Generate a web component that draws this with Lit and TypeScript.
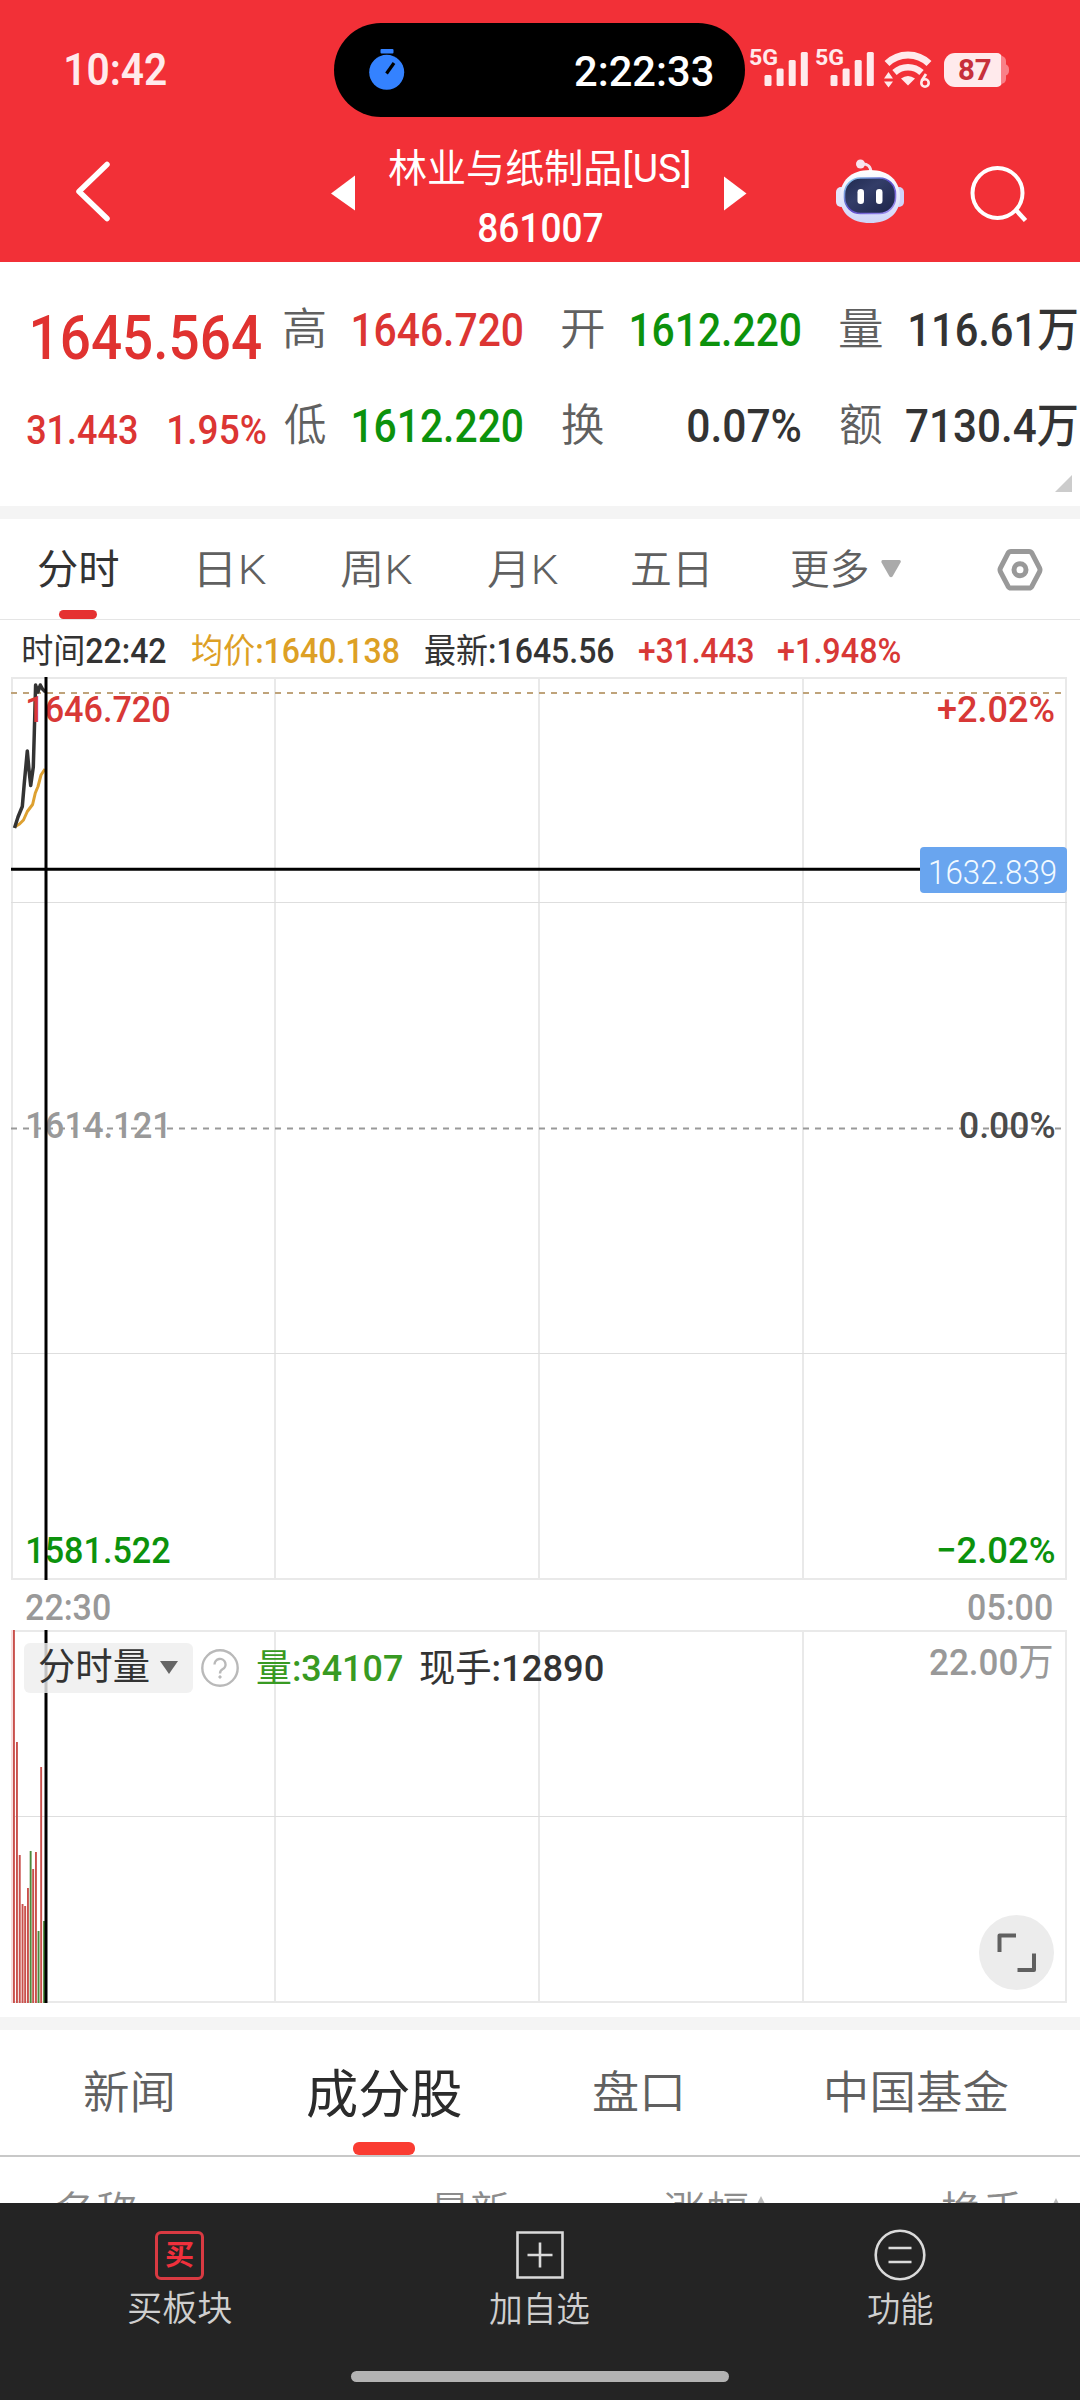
import { LitElement, html, svg, css } from "lit";
import { customElement, property, state, query } from "lit/decorators.js";
import { classMap } from "lit/directives/class-map.js";

/** One line of text whose visible ink spans exactly `w` pixels. */
@customElement("fit-text")
class FitText extends LitElement {
  static styles = css`
    :host { display: block; flex: none; white-space: nowrap; }
    .box { display: block; }
    .ink { display: inline-block; transform-origin: 0 50%; vertical-align: top; }
    .han { font-weight: var(--han-weight, inherit); }
  `;
  @property() text = "";
  @property({ type: Number }) w = 0;
  @state() private fit = "none";
  @query(".ink") private ink!: HTMLElement;

  firstUpdated() {
    const ctx = document.createElement("canvas").getContext("2d")!;
    const runs = [...this.ink.querySelectorAll("span")].map((run) => {
      const cs = getComputedStyle(run);
      ctx.font = `${cs.fontWeight} ${cs.fontSize} ${cs.fontFamily}`;
      return ctx.measureText(run.textContent ?? "");
    });
    const last = runs[runs.length - 1];
    const left = -runs[0].actualBoundingBoxLeft;
    const advance = runs.reduce((sum, m) => sum + m.width, 0);
    const scale = this.w / (advance - last.width + last.actualBoundingBoxRight - left);
    this.fit = `translateX(${-left * scale}px) scaleX(${scale})`;
  }

  render() {
    const runs = this.text.match(/[\u4e00-\u9fff]+|[^\u4e00-\u9fff]+/g) ?? [];
    return html`<div class="box" style="width:${this.w}px"><span class="ink" style="transform:${this.fit}">${runs.map(
      (run) => html`<span class=${classMap({ han: /[\u4e00-\u9fff]/.test(run) })}>${run}</span>`,
    )}</span></div>`;
  }
}

const t = (text: string, w: number, cls = "") =>
  html`<fit-text class=${cls} .text=${text} .w=${w}></fit-text>`;

@customElement("status-bar")
class StatusBar extends LitElement {
  static styles = css`
    :host { display: block; height: 134px; color: #ffeaec; }
    .row { display: flex; height: 140px; align-items: center; line-height: 46px; }
    .clock { margin-left: 65.5px; font-size: 43.5px; font-weight: 600; padding-top: 2px; }
    .island { margin-left: 168px; width: 411px; height: 94px; box-sizing: border-box; padding: 0 32px 0 34px;
      border-radius: 47px; background: #000; color: #fff; display: flex; align-items: center; justify-content: space-between; }
    .timer { font-size: 43px; font-weight: 500; padding-top: 2px; }
    .island svg { display: block; }
    .cell { display: flex; align-items: flex-start; margin-left: 5px; width: 61px; height: 40px; line-height: 18px; font-size: 22px; font-weight: 700; }
    .cell fit-text { margin-top: -1px; }
    .cell svg { margin: 2px 0 0 -13px; }
    .wifi { margin: 0 0 0 7px; }
    .battery { position: relative; margin: -1px 0 0 12px; width: 58px; height: 34px; border-radius: 11px 5px 5px 11px; background: #ffeaec; color: #c7303a;
      display: flex; align-items: center; padding-left: 15px; box-sizing: border-box; font-size: 29px; font-weight: 700; line-height: 34px; }
    .battery::before { content: ""; position: absolute; left: 57px; top: 3px; width: 5px; height: 28px; border-radius: 0 9px 9px 0; background: #f98088; }
    .battery::after { content: ""; position: absolute; left: 60px; top: 11px; width: 5px; height: 12px; border-radius: 0 5px 5px 0; background: #f98088; }
  `;
  private cell() {
    return html`<div class="cell">${t("5G", 27)}
      <svg width="44" height="35" fill="#ffeaec">
        <rect x="0.5" y="23" width="7" height="11" rx="1.5" /><rect x="12.6" y="16.500" width="7" height="17.500" rx="1.5" />
        <rect x="24.700" y="8" width="7" height="26" rx="1.5" /><rect x="36.800" y="0" width="7" height="34" rx="1.5" />
      </svg></div>`;
  }
  render() {
    return html`<div class="row">
      ${t("10:42", 100.5, "clock")}
      <div class="island">
        <svg width="38" height="46" viewBox="0 0 38 46">
          <rect x="12.500" y="2" width="13" height="4.500" rx="1" fill="#3482ff" /><circle cx="18.700" cy="25.300" r="17.500" fill="#3482ff" />
          <path d="M18.500 26.500l7.500-10.500" stroke="#000" stroke-width="3.200" />
        </svg>
        ${t("2:22:33", 138, "timer")}
      </div>
      ${this.cell()}${this.cell()}
      <svg class="wifi" width="48" height="40" viewBox="0 0 48 40" fill="none" stroke="#ffeaec">
        <path d="M3 13.500a30 30 0 0 1 42 0" stroke-width="7" />
        <path d="M10.500 22.500a20 20 0 0 1 27 0" stroke-width="6.500" />
        <path d="M17 28.500q7-5 14 0l-7 7z" fill="#ffeaec" stroke="none" />
        <path d="M0 28.500l4.500-6.500 4.500 6.500zM0 31.500h9l-4.500 6z" fill="#ffeaec" stroke="none" />
        <circle cx="41" cy="33" r="3.700" stroke-width="2.600" /><path d="M37.500 31l4.500-7" stroke-width="2.800" />
      </svg>
      <div class="battery">${t("87", 32)}</div>
    </div>`;
  }
}

@customElement("title-bar")
class TitleBar extends LitElement {
  static styles = css`
    :host { display: block; height: 128px; color: #fff; }
    .bar { display: grid; grid-template-rows: 117px; align-items: center; grid-template-columns: 75px 256px 58px 300px 35px 112px 134px 60px; }
    .names { display: grid; justify-items: center; padding-top: 11px; }
    .name { font-size: 38.500px; line-height: 60px; }
    .code { font-size: 41px; line-height: 58px; font-weight: 500; padding-left: 3px; }
    .back { margin-top: -3px; }
    .bot { margin-top: -3px; margin-left: -1px; }
    svg { display: block; }
  `;
  render() {
    return html`<div class="bar">
      <i></i>
      <svg class="back" width="40" height="64" viewBox="0 0 40 64"><path d="M32 5.500L4 32.500l28 27" fill="none" stroke="#fff" stroke-width="5.500" stroke-linecap="round" stroke-linejoin="round" /></svg>
      <svg width="24" height="36"><path d="M24 0.500v35L0 18.500z" fill="#fff" /></svg>
      <div class="names">${t("林业与纸制品[US]", 300, "name")}${t("861007", 123.5, "code")}</div>
      <i></i>
      <svg width="24" height="36"><path d="M0 1.500v34L22.500 18.500z" fill="#fff" /></svg>
      <svg class="bot" width="70" height="66" viewBox="0 0 70 66">
        <defs>
          <linearGradient id="h" x1="0" y1="0" x2="0" y2="1"><stop offset="0" stop-color="#fff" /><stop offset="1" stop-color="#cfd4f8" /></linearGradient>
          <linearGradient id="f" x1="0" y1="0" x2="1" y2="1"><stop offset="0" stop-color="#202a50" /><stop offset=".4" stop-color="#333d68" /><stop offset="1" stop-color="#1c2347" /></linearGradient>
          <linearGradient id="r" x1="0" y1="0" x2="1" y2="1"><stop offset="0" stop-color="#8fd8ef" /><stop offset=".5" stop-color="#5a48c8" /><stop offset="1" stop-color="#a79af5" /></linearGradient>
        </defs>
        <path d="M26 6q10-1 10 9" fill="none" stroke="#f6dfea" stroke-width="3" /><circle cx="25.500" cy="6" r="4.500" fill="#f8e4ee" />
        <rect x="1" y="29" width="10" height="20" rx="5" fill="#e4e4fb" /><rect x="59" y="29" width="10" height="20" rx="5" fill="#d0d3f8" />
        <path d="M35 12C54 12 65 23 65 39 65 55 54 65 35 65S5 55 5 39C5 23 16 12 35 12z" fill="url(#h)" />
        <rect x="9.500" y="20" width="51" height="35.500" rx="16" fill="url(#f)" stroke="url(#r)" stroke-width="1.600" />
        <rect x="22.500" y="31" width="6.500" height="15" rx="3.200" fill="#fff" /><rect x="41" y="31" width="6.500" height="15" rx="3.200" fill="#fff" />
      </svg>
      <svg width="60" height="60" viewBox="0 0 60 60" fill="none" stroke="#fff" stroke-width="4"><circle cx="27.500" cy="30" r="25" /><path d="M45.500 46.500l10 11" stroke-width="4.500" /></svg>
    </div>`;
  }
}

@customElement("quote-panel")
class QuotePanel extends LitElement {
  static styles = css`
    :host { display: block; height: 244px; background: #fff; position: relative; }
    .grid { display: grid; padding: 20px 0 0 26.500px; grid-auto-rows: 96px; line-height: 96px; font-size: 47px; font-weight: 500; color: #333;
      grid-template-columns: 257px 69px 209px 42px 197px 39px 41.500px 196px; }
    .up { color: #dc3533; } .down { color: #0c920c; }
    .end { justify-self: end; }
    .label { font-size: 44px; font-weight: 350; color: #606060; }
    .last { margin-left: 6px; font-size: 62px; line-height: 112px; color: #e03230; }
    .change { display: flex; gap: 32px; font-size: 41.500px; line-height: 103px; }
    .label.k { grid-column: 7; }
    .corner { position: absolute; right: 8px; bottom: 14px; width: 17px; height: 17px; background: #ccc; clip-path: polygon(100% 0, 100% 100%, 0 100%); }
  `;
  render() {
    return html`<div class="grid">
        ${t("1645.564", 228, "last")}${t("高", 41, "label")}${t("1646.720", 169.5, "up")}
        ${t("开", 41.5, "label")}${t("1612.220", 169.5, "down end")}${t("量", 41.5, "label k")}${t("116.61万", 167, "end")}
        <div class="change up">${t("31.443", 110)}${t("1.95%", 96.5)}</div>${t("低", 41.5, "label")}${t("1612.220", 169.5, "down")}
        ${t("换", 41.5, "label")}${t("0.07%", 112.5, "end")}${t("额", 41.5, "label k")}${t("7130.4万", 171, "end")}
      </div><div class="corner"></div>`;
  }
}

@customElement("period-tabs")
class PeriodTabs extends LitElement {
  static styles = css`
    :host { display: block; height: 101px; box-sizing: border-box; border-bottom: 1px solid #e5e5e5; background: #fff; }
    .tabs { display: grid; height: 100px; align-items: center; padding-left: 37.500px; line-height: 60px; font-size: 40.500px; font-weight: 350; color: #606060;
      grid-template-columns: 162px 141px 147px 144.500px 159px 90px 115.500px 50px; }
    .tab { display: grid; height: 100px; align-content: center; position: relative; width: max-content; }
    .on { color: #333; font-weight: 400; }
    .on::after { content: ""; position: absolute; left: 21px; bottom: 0; width: 38px; height: 9px; border-radius: 4.500px; background: #e53131; }
    .tab fit-text { position: relative; top: 1px; }
    svg { display: block; }
    .gear { margin-top: 1px; }
  `;
  render() {
    const tabs: [string, number][] = [["分时", 80], ["日K", 66], ["周K", 71], ["月K", 70], ["五日", 75], ["更多", 77]];
    return html`<div class="tabs">
      ${tabs.map(([label, w], i) => html`<div class=${classMap({ tab: true, on: i === 0 })}>${t(label, w)}</div>`)}
      <svg width="20" height="18"><path d="M1.500 0h17q2 0.500 1 2.500L11.500 16.500q-1.500 1.500-3 0L.5 2.500Q0 .5 1.500 0z" fill="#aaa" /></svg>
      <svg class="gear" width="46" height="46" viewBox="0 0 46 46" fill="none" stroke="#999" stroke-width="5" stroke-linejoin="round">
        <path d="M14 4.500h18q2 0 3 1.800l7.500 14.500q1 2 0 4L35 39.200q-1 1.800-3 1.800H14q-2 0-3-1.800L3.500 24.800q-1-2 0-4L11 6.300q1-1.800 3-1.800z" /><circle cx="23" cy="22.800" r="6" />
      </svg>
    </div>`;
  }
}

const GRID = "#e9e9e9";
const PRICE = "14.5,151 18,140 22.3,129.500 24.3,106 27.3,74 29,93 30.7,108.500 33.300,90 34.300,56 35.600,8 38,15 40.300,8 42.500,12 45.500,15";
const AVERAGE = "14.5,150 19.500,147 23.5,143 27.3,134.500 32.600,127.500 35.3,116 38,109.500 41,98 45,92";
/** [x, top, rising] of each one-minute volume bar */
const VOLUME: [number, number, boolean][] = [
  [13, 0, true], [16, 112, true], [18.8, 225, true], [21.6, 274, true], [24.2, 276, true], [27, 258, true],
  [29.7, 221, false], [32.2, 239, true], [35, 222, true], [37.6, 301, false], [40.2, 137, true], [43.1, 291, false],
];

@customElement("trend-chart")
class TrendChart extends LitElement {
  static styles = css`
    :host { display: block; background: #fff; }
    .info { --han-weight: 400; display: grid; padding-left: 22.500px; height: 57px; line-height: 63px; font-size: 34.500px; font-weight: 500; color: #333;
      grid-template-columns: 169.500px 232.500px 214.500px 139px 130px; }
    .avg { color: #dda025; } .up { color: #d83836; } .down { color: #0c920c; } .flat { color: #999; } .zero { color: #4a4a4a; }
    .plot { position: relative; height: 903px; font-size: 37.500px; font-weight: 500; }
    svg { display: block; }
    .axis { position: absolute; top: 0; left: 27.500px; right: 26.500px; height: 903px; display: flex; flex-direction: column; }
    .pair { display: flex; justify-content: space-between; line-height: 64px; height: 64px; }
    .mid { margin-top: 352px; } .low { margin-top: 361px; }
    .cross { position: absolute; inset: 0; }
    .price { position: absolute; right: 13px; top: 170px; width: 147px; height: 46px; box-sizing: border-box; padding-left: 10px; border-radius: 4px;
      background: #69a5ef; color: #f2faff; font-size: 33px; line-height: 51px; font-weight: 350; }
    .times { display: flex; justify-content: space-between; height: 50px; line-height: 54px; padding: 0 28.500px 0 25.500px; font-size: 37.500px; font-weight: 500; color: #999; }
    .vol { --han-weight: 400; position: relative; height: 387px; font-size: 37.500px; font-weight: 500; }
    .legend { position: absolute; top: 13px; left: 24px; right: 28px; display: flex; align-items: center; height: 50px; line-height: 50px; color: #333; }
    .chip { display: flex; align-items: center; width: 169px; height: 50px; box-sizing: border-box; padding-left: 14.500px; gap: 11px; border-radius: 6px; background: rgba(238, 238, 238, .82); font-size: 37px; line-height: 52px; }
    .help { margin: 0 17.500px 0 8px; }
    .volume { color: #389a22; margin-right: 18.500px; }
    .peak { margin-left: auto; color: #999; position: relative; top: -6px; }
    .full { position: absolute; right: 26px; top: 285px; width: 75px; height: 75px; border-radius: 50%; background: #ececec; }
  `;
  private frame(h: number, rows: number[]) {
    return svg`<g fill="none" stroke=${GRID}>
      <path stroke-width="2" d="M12 0V${h}M275 0V${h}M539 0V${h}M803 0V${h}M1066 0V${h}M11 1H1067M11 ${h - 1}H1067" />
      ${rows.map((y) => svg`<path stroke="#dedede" d="M11 ${y}H1067" />`)}</g>`;
  }
  render() {
    return html`
      <div class="info">
        ${t("时间22:42", 143)}${t("均价:1640.138", 206.5, "avg")}${t("最新:1645.56", 189)}${t("+31.443", 114, "up")}${t("+1.948%", 122, "up")}
      </div>
      <div class="plot">
        <svg width="1080" height="903" fill="none">
          ${this.frame(903, [225.5, 676.5])}
          <path d="M11 16H1062" stroke="#bfa37a" stroke-width="2" stroke-dasharray="6 6" />
          <path d="M11 451.500H1062" stroke="#999" stroke-width="2" stroke-dasharray="6 6" />
          <polyline points=${AVERAGE} stroke="#dda030" stroke-width="3" stroke-linejoin="round" />
          <polyline points=${PRICE} stroke="#333" stroke-width="3.500" stroke-linejoin="round" />
        </svg>
        <div class="axis">
          <div class="pair up">${t("1646.720", 141.5)}${t("+2.02%", 115.5)}</div>
          <div class="pair mid"><span class="flat">${t("1614.121", 138)}</span><span class="zero">${t("0.00%", 94)}</span></div>
          <div class="pair low down">${t("1581.522", 141.5)}${t("−2.02%", 116)}</div>
        </div>
        <svg class="cross" width="1080" height="903"><path d="M46 0V903M11 192.300H925" stroke="#000" stroke-width="3" /></svg>
        <div class="price">${t("1632.839", 126)}</div>
      </div>
      <div class="times">${t("22:30", 84)}${t("05:00", 84)}</div>
      <div class="vol">
        <svg width="1080" height="373">
          ${this.frame(373, [186.5])}
          <rect x="11" y="0" width="2" height="373" fill="#f8dede" />
          ${VOLUME.map(([x, y, up]) => svg`<rect x=${x} y=${y} width="1.900" height=${373 - y} fill=${up ? "#c9504c" : "#4d8a3c"} />`)}
          <path d="M46 0V373" stroke="#000" stroke-width="3" />
        </svg>
        <div class="legend">
          <div class="chip">${t("分时量", 110)}<svg width="18" height="14"><path d="M0 0h18L9 13z" fill="#666" /></svg></div>
          <svg class="help" width="38" height="38" viewBox="0 0 38 38" fill="none" stroke="#b9b9b9" stroke-width="2.400">
            <circle cx="19" cy="19" r="17.700" /><path d="M13.500 15.500a5.500 5.500 0 1 1 8 4.800q-2.500 1.500-2.500 4.200" /><circle cx="19" cy="28" r="1.200" fill="#b9b9b9" stroke-width="1" />
          </svg>
          ${t("量:34107", 145, "volume")}${t("现手:12890", 183)}${t("22.00万", 122, "peak")}
        </div>
        <div class="full"><svg width="75" height="75" fill="none" stroke="#606060" stroke-width="4" stroke-linejoin="round"><path d="M20.500 37V20.500H37M38.500 55H55V38.500" /></svg></div>
      </div>`;
  }
}

@customElement("detail-tabs")
class DetailTabs extends LitElement {
  static styles = css`
    :host { display: block; height: 173px; background: #fff; overflow: hidden; }
    .tabs { display: grid; grid-template-columns: 223px 287px 232.500px 200px; padding-left: 84px; height: 125px; border-bottom: 2px solid #c8c8c8;
      line-height: 128px; font-size: 45px; font-weight: 350; color: #606060; }
    .tab { position: relative; height: 125px; }
    .on { color: #2b2b2b; font-size: 52px; font-weight: 400; line-height: 131px; }
    .on::after { content: ""; position: absolute; left: 46px; bottom: 0; width: 62px; height: 13px; border-radius: 6px; background: #fa3c32; }
    .head { display: grid; grid-template-columns: 376px 232.500px 278px 120px; padding-left: 55px; height: 46px; overflow: hidden; line-height: 110px; font-size: 40px; font-weight: 350; color: #8c8c8c; }
    .sort { display: flex; gap: 6px; }
    .asc { margin-top: 39px; }
    .both { margin: 41px 0 0 20px; }
  `;
  private arrow(cls: string) {
    return html`<svg class=${cls} width="14" height="14"><path d="M7 0l7 14H0z" fill="#bbb" /></svg>`;
  }
  render() {
    return html`
      <div class="tabs">
        <div class="tab">${t("新闻", 88)}</div><div class="tab on">${t("成分股", 154.5)}</div>
        <div class="tab">${t("盘口", 87)}</div><div class="tab">${t("中国基金", 181)}</div>
      </div>
      <div class="head">
        ${t("名称", 81)}${t("最新", 78)}<div class="sort">${t("涨幅", 84)}${this.arrow("asc")}</div><div class="sort">${t("换手", 81)}${this.arrow("both")}</div>
      </div>`;
  }
}

@customElement("action-bar")
class ActionBar extends LitElement {
  static styles = css`
    :host { display: block; height: 197px; background: #242424; }
    .actions { display: grid; grid-template-columns: repeat(3, 360px); height: 168px; padding-top: 25px; box-sizing: border-box; color: #cfcfcf; font-size: 35.500px; font-weight: 350; }
    .action { display: grid; justify-items: center; align-content: start; }
    .icon { display: grid; place-items: center; height: 54px; }
    .label { line-height: 56px; }
    .first { line-height: 54px; }
    .buy { width: 49px; height: 49px; box-sizing: border-box; border: 3px solid #d93a42; border-radius: 6px; color: #f0303c; font-size: 28px; font-weight: 700; line-height: 43px; display: grid; place-items: center; margin-right: 1px; }
    .buy fit-text { margin-right: 1px; }
    .home { width: 378px; height: 11px; margin: 0 auto; border-radius: 5.500px; background: #b3b3b3; }
    svg { display: block; }
  `;
  render() {
    return html`<div class="actions">
        <div class="action"><div class="icon"><div class="buy">${t("买", 27)}</div></div>${t("买板块", 104, "label first")}</div>
        <div class="action"><div class="icon"><svg width="48" height="48" fill="none" stroke="#dadada" stroke-width="2.600"><path d="M1.500 1.500h45v45h-45zM24 11.500v25M11.500 24h25" /></svg></div>${t("加自选", 99.5, "label")}</div>
        <div class="action"><div class="icon"><svg width="52" height="52" fill="none" stroke="#dadada" stroke-width="2.600"><circle cx="26" cy="26" r="24.300" /><path d="M14.500 19h23M14.500 33h23" /></svg></div>${t("功能", 65, "label")}</div>
      </div>
      <div class="home"></div>`;
  }
}

@customElement("app-root")
class AppRoot extends LitElement {
  static styles = css`
    :host { display: block; width: 1080px; height: 2400px; overflow: hidden; background: #fff; font-family: Roboto, "Noto Sans CJK SC", sans-serif; }
    .top { height: 262px; background: #f23037; }
    .band { height: 13px; background: #f4f4f4; }
  `;
  render() {
    return html`
      <div class="top"><status-bar></status-bar><title-bar></title-bar></div>
      <quote-panel></quote-panel>
      <div class="band"></div>
      <period-tabs></period-tabs>
      <trend-chart></trend-chart>
      <div class="band"></div>
      <detail-tabs></detail-tabs>
      <action-bar></action-bar>`;
  }
}
